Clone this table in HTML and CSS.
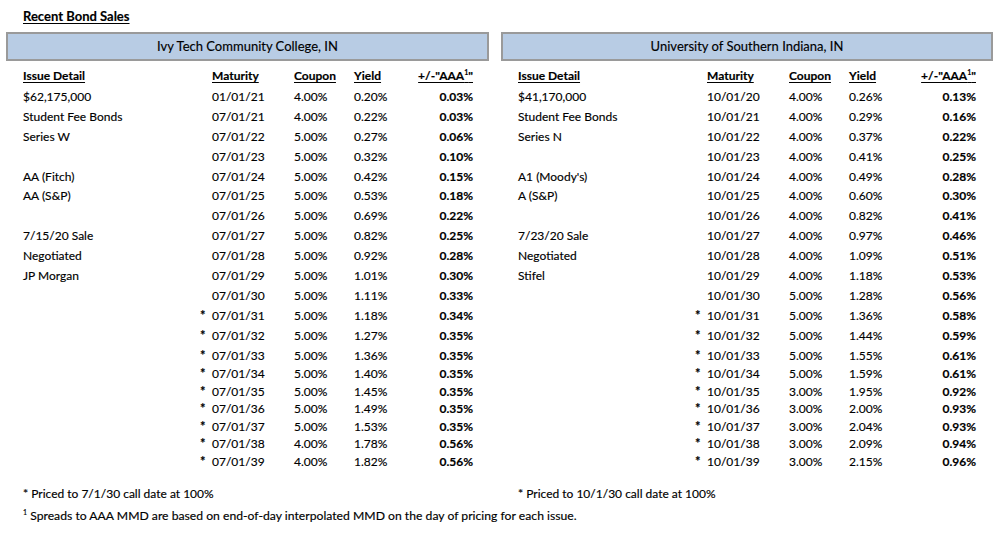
FILE: index.html
```html
<!DOCTYPE html>
<html>
<head>
<meta charset="utf-8">
<link rel="stylesheet" href="styles.css">
</head>
<body>
<div class="page">
  <div class="title">Recent Bond Sales</div>
  <div class="panels">
    <section class="panel left">
      <div class="banner">Ivy Tech Community College, IN</div>
      <div class="table">
        <div class="row head"><span class="u">Issue Detail</span><span></span><span class="u">Maturity</span><span class="u">Coupon</span><span class="u">Yield</span><span class="u r">+/-"AAA<sup>1</sup>"</span></div>
        <div class="row"><span>$62,175,000</span><span></span><span>01/01/21</span><span>4.00%</span><span>0.20%</span><span class="b r">0.03%</span></div>
        <div class="row"><span>Student Fee Bonds</span><span></span><span>07/01/21</span><span>4.00%</span><span>0.22%</span><span class="b r">0.03%</span></div>
        <div class="row"><span>Series W</span><span></span><span>07/01/22</span><span>5.00%</span><span>0.27%</span><span class="b r">0.06%</span></div>
        <div class="row"><span></span><span></span><span>07/01/23</span><span>5.00%</span><span>0.32%</span><span class="b r">0.10%</span></div>
        <div class="row"><span>AA (Fitch)</span><span></span><span>07/01/24</span><span>5.00%</span><span>0.42%</span><span class="b r">0.15%</span></div>
        <div class="row"><span>AA (S&amp;P)</span><span></span><span>07/01/25</span><span>5.00%</span><span>0.53%</span><span class="b r">0.18%</span></div>
        <div class="row"><span></span><span></span><span>07/01/26</span><span>5.00%</span><span>0.69%</span><span class="b r">0.22%</span></div>
        <div class="row"><span>7/15/20 Sale</span><span></span><span>07/01/27</span><span>5.00%</span><span>0.82%</span><span class="b r">0.25%</span></div>
        <div class="row"><span>Negotiated</span><span></span><span>07/01/28</span><span>5.00%</span><span>0.92%</span><span class="b r">0.28%</span></div>
        <div class="row"><span>JP Morgan</span><span></span><span>07/01/29</span><span>5.00%</span><span>1.01%</span><span class="b r">0.30%</span></div>
        <div class="row"><span></span><span></span><span>07/01/30</span><span>5.00%</span><span>1.11%</span><span class="b r">0.33%</span></div>
        <div class="row"><span></span><span class="star">*</span><span>07/01/31</span><span>5.00%</span><span>1.18%</span><span class="b r">0.34%</span></div>
        <div class="row"><span></span><span class="star">*</span><span>07/01/32</span><span>5.00%</span><span>1.27%</span><span class="b r">0.35%</span></div>
        <div class="row"><span></span><span class="star">*</span><span>07/01/33</span><span>5.00%</span><span>1.36%</span><span class="b r">0.35%</span></div>
        <div class="row short"><span></span><span class="star">*</span><span>07/01/34</span><span>5.00%</span><span>1.40%</span><span class="b r">0.35%</span></div>
        <div class="row short"><span></span><span class="star">*</span><span>07/01/35</span><span>5.00%</span><span>1.45%</span><span class="b r">0.35%</span></div>
        <div class="row short"><span></span><span class="star">*</span><span>07/01/36</span><span>5.00%</span><span>1.49%</span><span class="b r">0.35%</span></div>
        <div class="row short"><span></span><span class="star">*</span><span>07/01/37</span><span>5.00%</span><span>1.53%</span><span class="b r">0.35%</span></div>
        <div class="row short"><span></span><span class="star">*</span><span>07/01/38</span><span>4.00%</span><span>1.78%</span><span class="b r">0.56%</span></div>
        <div class="row short"><span></span><span class="star">*</span><span>07/01/39</span><span>4.00%</span><span>1.82%</span><span class="b r">0.56%</span></div>
      </div>
    </section>
    <section class="panel right">
      <div class="banner">University of Southern Indiana, IN</div>
      <div class="table">
        <div class="row head"><span class="u">Issue Detail</span><span></span><span class="u">Maturity</span><span class="u">Coupon</span><span class="u">Yield</span><span class="u r">+/-"AAA<sup>1</sup>"</span></div>
        <div class="row"><span>$41,170,000</span><span></span><span>10/01/20</span><span>4.00%</span><span>0.26%</span><span class="b r">0.13%</span></div>
        <div class="row"><span>Student Fee Bonds</span><span></span><span>10/01/21</span><span>4.00%</span><span>0.29%</span><span class="b r">0.16%</span></div>
        <div class="row"><span>Series N</span><span></span><span>10/01/22</span><span>4.00%</span><span>0.37%</span><span class="b r">0.22%</span></div>
        <div class="row"><span></span><span></span><span>10/01/23</span><span>4.00%</span><span>0.41%</span><span class="b r">0.25%</span></div>
        <div class="row"><span>A1 (Moody's)</span><span></span><span>10/01/24</span><span>4.00%</span><span>0.49%</span><span class="b r">0.28%</span></div>
        <div class="row"><span>A (S&amp;P)</span><span></span><span>10/01/25</span><span>4.00%</span><span>0.60%</span><span class="b r">0.30%</span></div>
        <div class="row"><span></span><span></span><span>10/01/26</span><span>4.00%</span><span>0.82%</span><span class="b r">0.41%</span></div>
        <div class="row"><span>7/23/20 Sale</span><span></span><span>10/01/27</span><span>4.00%</span><span>0.97%</span><span class="b r">0.46%</span></div>
        <div class="row"><span>Negotiated</span><span></span><span>10/01/28</span><span>4.00%</span><span>1.09%</span><span class="b r">0.51%</span></div>
        <div class="row"><span>Stifel</span><span></span><span>10/01/29</span><span>4.00%</span><span>1.18%</span><span class="b r">0.53%</span></div>
        <div class="row"><span></span><span></span><span>10/01/30</span><span>5.00%</span><span>1.28%</span><span class="b r">0.56%</span></div>
        <div class="row"><span></span><span class="star">*</span><span>10/01/31</span><span>5.00%</span><span>1.36%</span><span class="b r">0.58%</span></div>
        <div class="row"><span></span><span class="star">*</span><span>10/01/32</span><span>5.00%</span><span>1.44%</span><span class="b r">0.59%</span></div>
        <div class="row"><span></span><span class="star">*</span><span>10/01/33</span><span>5.00%</span><span>1.55%</span><span class="b r">0.61%</span></div>
        <div class="row short"><span></span><span class="star">*</span><span>10/01/34</span><span>5.00%</span><span>1.59%</span><span class="b r">0.61%</span></div>
        <div class="row short"><span></span><span class="star">*</span><span>10/01/35</span><span>3.00%</span><span>1.95%</span><span class="b r">0.92%</span></div>
        <div class="row short"><span></span><span class="star">*</span><span>10/01/36</span><span>3.00%</span><span>2.00%</span><span class="b r">0.93%</span></div>
        <div class="row short"><span></span><span class="star">*</span><span>10/01/37</span><span>3.00%</span><span>2.04%</span><span class="b r">0.93%</span></div>
        <div class="row short"><span></span><span class="star">*</span><span>10/01/38</span><span>3.00%</span><span>2.09%</span><span class="b r">0.94%</span></div>
        <div class="row short"><span></span><span class="star">*</span><span>10/01/39</span><span>3.00%</span><span>2.15%</span><span class="b r">0.96%</span></div>
      </div>
    </section>
  </div>
  <div class="panels notes">
    <div class="note left">* Priced to 7/1/30 call date at 100%</div>
    <div class="note right">* Priced to 10/1/30 call date at 100%</div>
  </div>
  <div class="footnote"><sup>1</sup> Spreads to AAA MMD are based on end-of-day interpolated MMD on the day of pricing for each issue.</div>
</div>
</body>
</html>
```
FILE: styles.css
```css
html, body {
  margin: 0;
  padding: 0;
  background: #ffffff;
}
body {
  font-family: Lato, "Noto Sans", sans-serif;
  font-size: 12px;
  color: #000;
  -webkit-text-stroke: 0.15px #000;
}
.page {
  width: 1000px;
  height: 533px;
  padding: 6px 0 0 6px;
  box-sizing: border-box;
}
.title {
  height: 20px;
  line-height: 20px;
  padding-left: 17px;
  font-weight: 700;
  font-size: 13px;
  text-decoration: underline;
  text-underline-offset: 2px;
}
.panels {
  display: flex;
  gap: 12px;
  margin-top: 6px;
}
.panel.left, .note.left { width: 483px; }
.panel.right, .note.right { width: 492px; }
.banner {
  height: 29px;
  box-sizing: border-box;
  border: 2px solid #9a9a9a;
  background: #b8cce4;
  text-align: center;
  line-height: 25px;
  font-size: 13px;
}
.table {
  margin-top: 5px;
  padding: 0 16px 0 17px;
}
.panel.right .table { padding-right: 17px; }
.row {
  display: grid;
  grid-template-columns: 177px 12px 82px 60px 1fr auto;
  height: 19.9px;
  line-height: 19.9px;
  white-space: nowrap;
}
.row.head { height: 21px; line-height: 20px; }
.row.short { height: 17.5px; line-height: 17.5px; }
.star {
  font-size: 13px;
  font-weight: 700;
}
.u {
  font-weight: 700;
  text-decoration: underline;
  text-underline-offset: 2px;
}
.b { font-weight: 700; }
.r { text-align: right; }
sup {
  font-size: 7px;
  line-height: 0;
  vertical-align: 5px;
}
.notes {
  margin-top: 14px;
}
.note {
  box-sizing: border-box;
  flex: none;
  padding-left: 17px;
  height: 20px;
  line-height: 20px;
}
.footnote {
  padding-left: 17px;
  height: 22px;
  line-height: 24px;
  font-size: 12.2px;
}
```
